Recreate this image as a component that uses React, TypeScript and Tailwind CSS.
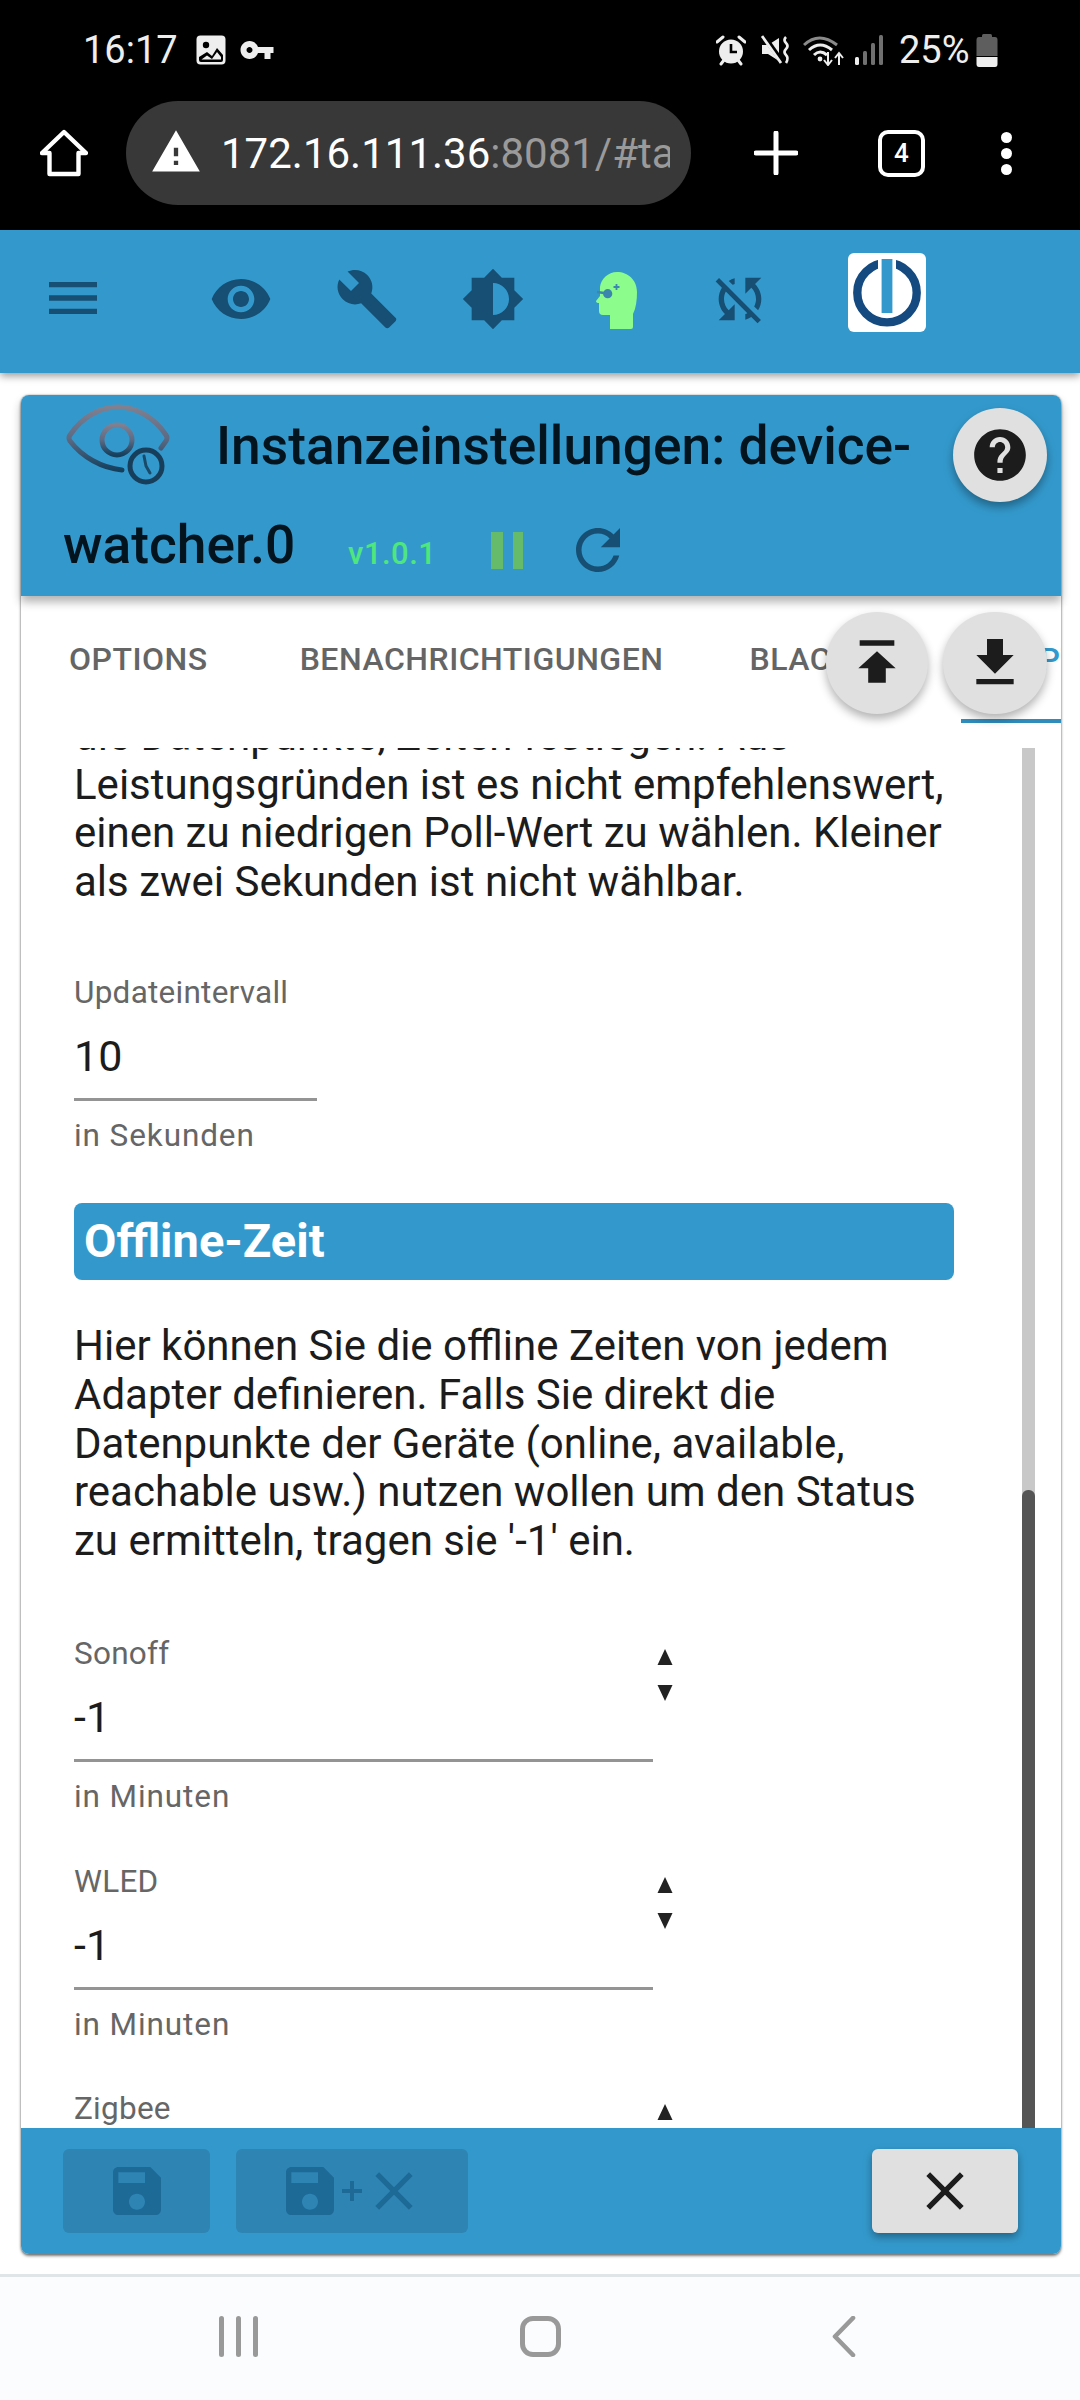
import React from "react";

const DARK = "#164f73";

function I({ d, size, color, className }: { d: string; size: number; color: string; className?: string }) {
  return (
    <svg width={size} height={size} viewBox="0 0 24 24" fill={color} className={className}>
      <path d={d} />
    </svg>
  );
}

const P = {
  menu: "M3 18h18v-2H3v2zm0-5h18v-2H3v2zm0-7v2h18V6H3z",
  eye: "M12 4.5C7 4.5 2.73 7.61 1 12c1.73 4.39 6 7.5 11 7.5s9.27-3.11 11-7.5c-1.73-4.39-6-7.5-11-7.5zM12 17c-2.76 0-5-2.24-5-5s2.24-5 5-5 5 2.24 5 5-2.24 5-5 5zm0-8c-1.66 0-3 1.34-3 3s1.34 3 3 3 3-1.34 3-3-1.34-3-3-3z",
  build: "M22.7 19l-9.1-9.1c.9-2.3.4-5-1.5-6.9-2-2-5-2.4-7.4-1.3L9 6 6 9 1.6 4.7C.4 7.1.9 10.1 2.9 12.1c1.9 1.9 4.6 2.4 6.9 1.5l9.1 9.1c.4.4 1 .4 1.4 0l2.3-2.3c.5-.4.5-1.1.1-1.4z",
  bright: "M20 15.31L23.31 12 20 8.69V4h-4.69L12 .69 8.69 4H4v4.69L.69 12 4 15.31V20h4.69L12 23.31 15.31 20H20v-4.69zM12 18V6c3.31 0 6 2.69 6 6s-2.69 6-6 6z",
  sync: "M10 6.35V4.26c-.8.21-1.55.54-2.23.96l1.46 1.46c.25-.12.5-.24.77-.33zm-7.14-.94l2.36 2.36C4.45 8.99 4 10.44 4 12c0 2.21.91 4.2 2.36 5.64L4 20h6v-6l-2.24 2.24C6.68 15.15 6 13.66 6 12c0-1 .25-1.94.68-2.77l8.08 8.08c-.25.13-.5.25-.77.34v2.09c.8-.21 1.55-.54 2.23-.96l2.36 2.36 1.27-1.27L4.14 4.14 2.86 5.41zM20 4h-6v6l2.24-2.24C17.32 8.85 18 10.34 18 12c0 1-.25 1.94-.68 2.77l1.46 1.46C19.55 15.01 20 13.56 20 12c0-2.21-.91-4.2-2.36-5.64L20 4z",
  refresh: "M17.65 6.35C16.2 4.9 14.21 4 12 4c-4.42 0-7.99 3.58-7.99 8s3.57 8 7.99 8c3.73 0 6.84-2.55 7.73-6h-2.08c-.82 2.33-3.04 4-5.65 4-3.31 0-6-2.69-6-6s2.69-6 6-6c1.66 0 3.14.69 4.22 1.78L13 11h7V4l-2.35 2.35z",
  help: "M12 2C6.48 2 2 6.48 2 12s4.48 10 10 10 10-4.48 10-10S17.52 2 12 2zm1 17h-2v-2h2v2zm2.07-7.75l-.9.92C13.45 12.9 13 13.5 13 15h-2v-.5c0-1.1.45-2.1 1.17-2.83l1.24-1.26c.37-.36.59-.86.59-1.41 0-1.1-.9-2-2-2s-2 .9-2 2H8c0-2.21 1.79-4 4-4s4 1.79 4 4c0 .88-.36 1.68-.93 2.25z",
  top: "M5.5 3.5h13v2h-13zM12 7.6l7 6.4h-3.7v5.4H8.7V14H5z",
  bottom: "M19 9h-4V3H9v6H5l7 7 7-7zM5 18v2h14v-2H5z",
  save: "M17 3H5c-1.11 0-2 .9-2 2v14c0 1.1.89 2 2 2h14c1.1 0 2-.9 2-2V7l-4-4zm-5 16c-1.66 0-3-1.34-3-3s1.34-3 3-3 3 1.34 3 3-1.34 3-3 3zm3-10H5V5h10v4z",
  close: "M19 6.41 17.59 5 12 10.59 6.41 5 5 6.41 10.59 12 5 17.59 6.41 19 12 13.41 17.59 19 19 17.59 13.41 12z",
  warn: "M1 21h22L12 2 1 21zm12-3h-2v-2h2v2zm0-4h-2v-4h2v4z",
  key: "M12.65 10C11.83 7.67 9.61 6 7 6c-3.31 0-6 2.69-6 6s2.69 6 6 6c2.61 0 4.83-1.67 5.65-4H17v4h4v-4h2v-4H12.65zM7 14c-1.1 0-2-.9-2-2s.9-2 2-2 2 .9 2 2-.9 2-2 2z",
};

function StatusBar() {
  return (
    <div className="flex h-[98px] items-center pl-[83px] pt-[2px] text-[38px] text-[#eeeeee]">
      <span className="w-[95px] leading-none">16:17</span>
      <svg width="30" height="30" viewBox="0 0 30 30" className="ml-[18px]">
        <rect x="0.5" y="0.5" width="29" height="29" rx="4" fill="#eeeeee" />
        <circle cx="10" cy="10" r="3.2" fill="#000" />
        <path d="M3 25 L3 22 L11 17 L16 21 L21 13 L27 20 L27 25 Q27 27 25 27 L5 27 Q3 27 3 25 Z" fill="#000" />
        <path d="M5.5 24.5 L11 20.5 L16 24 L21 17 L25 22 L25 24.5 Z" fill="#eeeeee" />
      </svg>
      <I d={P.key} size={36} color="#eeeeee" className="ml-[13px]" />
      <div className="flex-1" />
      <svg width="30" height="31" viewBox="0 0 30 31" className="mr-[15px]">
        <circle cx="15" cy="16.5" r="12" fill="#eeeeee" />
        <path d="M15 9 V17 H21" stroke="#000" strokeWidth="2.6" fill="none" />
        <path d="M1 7 L7 2 M29 7 L23 2" stroke="#eeeeee" strokeWidth="3" strokeLinecap="round" />
        <path d="M5 29 L8 25 M25 29 L22 25" stroke="#eeeeee" strokeWidth="3" strokeLinecap="round" />
      </svg>
      <svg width="30" height="30" viewBox="0 0 30 30" className="mr-[12px]">
        <path d="M1 10 H7 L18 3 V26 L7 19 H1 Z" fill="#eeeeee" />
        <path d="M2 0 L22 28" stroke="#000" strokeWidth="5" />
        <path d="M1 1 L20 28" stroke="#eeeeee" strokeWidth="2.8" />
        <path d="M25 2 Q22 5 25 8 Q28 11 25 14 Q22 17 25 20 Q28 23 25 28" stroke="#eeeeee" strokeWidth="2.6" fill="none" />
      </svg>
      <svg width="42" height="32" viewBox="0 0 42 32" className="mr-[10px]">
        <path d="M1 11 Q16 -3 34 11" stroke="#8a8a8a" strokeWidth="3" fill="none" />
        <path d="M6 16 Q17 6 29 16" stroke="#eeeeee" strokeWidth="3" fill="none" />
        <path d="M11 21 Q17 15 24 21" stroke="#eeeeee" strokeWidth="3" fill="none" />
        <circle cx="17" cy="25" r="2.4" fill="#eeeeee" />
        <path d="M25 18 V30 M21 26 L25 31 L29 26" stroke="#eeeeee" strokeWidth="2" fill="none" />
        <path d="M36 31 V20 M32 24 L36 19 L40 24" stroke="#eeeeee" strokeWidth="2" fill="none" />
      </svg>
      <svg width="29" height="30" viewBox="0 0 29 30" className="mr-[15px]">
        <rect x="0" y="22" width="4" height="8" rx="1.5" fill="#eeeeee" />
        <rect x="8" y="16" width="4" height="14" rx="1.5" fill="#707070" />
        <rect x="16" y="8" width="4" height="22" rx="1.5" fill="#707070" />
        <rect x="24" y="0" width="4" height="30" rx="1.5" fill="#707070" />
      </svg>
      <span className="w-[72px] leading-none">25%</span>
      <svg width="22" height="33" viewBox="0 0 22 33" className="ml-[5px] mr-[82px]">
        <rect x="6" y="0" width="10" height="5" rx="1.5" fill="#5e5e5e" />
        <path d="M3 3 H19 Q21.5 3 21.5 6 V22 H0.5 V6 Q0.5 3 3 3 Z" fill="#5e5e5e" />
        <path d="M0.5 23 H21.5 V30 Q21.5 33 19 33 H3 Q0.5 33 0.5 30 Z" fill="#eeeeee" />
      </svg>
    </div>
  );
}

function UrlBar() {
  return (
    <div className="flex h-[104px] items-center">
      <svg width="48" height="48" viewBox="0 0 48 48" className="ml-[40px]">
        <path d="M24 3 L46 24 H38.5 V45 H9.5 V24 H2 Z" fill="none" stroke="#fff" strokeWidth="4.4" strokeLinejoin="round" />
      </svg>
      <div className="ml-[38px] flex h-[104px] w-[565px] items-center rounded-full bg-[#383838] pl-[24px]">
        <I d={P.warn} size={52} color="#fff" className="mb-[3px] shrink-0" />
        <div className="ml-[19px] w-[449px] overflow-hidden whitespace-nowrap text-[42px] text-white">
          172.16.111.36<span className="text-[#9a9a9a]">:8081/#tab-instances</span>
        </div>
      </div>
      <svg width="44" height="44" viewBox="0 0 44 44" className="ml-[63px]">
        <path d="M22 2 V42 M2 22 H42" stroke="#fff" strokeWidth="5" strokeLinecap="round" />
      </svg>
      <div className="ml-[80px] flex h-[47px] w-[47px] items-center justify-center rounded-[10px] border-[4px] border-white text-[26px] font-medium text-white">
        4
      </div>
      <div className="ml-[76px] flex flex-col gap-[5px]">
        <div className="h-[11px] w-[11px] rounded-full bg-white" />
        <div className="h-[11px] w-[11px] rounded-full bg-white" />
        <div className="h-[11px] w-[11px] rounded-full bg-white" />
      </div>
    </div>
  );
}

function AppBar() {
  return (
    <div className="relative z-20 flex h-[143px] items-start bg-[#3399cc] shadow-[0_3px_8px_rgba(0,0,0,0.4)]">
      <I d={P.menu} size={64} color={DARK} className="ml-[41px] mt-[36px]" />
      <I d={P.eye} size={64} color={DARK} className="ml-[104px] mt-[37px]" />
      <I d={P.build} size={64} color={DARK} className="ml-[62px] mt-[37px]" />
      <I d={P.bright} size={64} color={DARK} className="ml-[62px] mt-[37px]" />
      <svg width="41" height="57" viewBox="0 0 41 57" className="ml-[71px] mt-[42px]">
        <path d="M14 57 H35 Q37 57 37 55 V42 C40 36 41 28 41 20 C41 8 32 0 21 0 C12 0 5 7 4 15 L4 24 L0 29 Q0 31 3 31 V39 Q3 43 7 43 H14 Z" fill="#8cfc8c" />
        <circle cx="11.7" cy="21.7" r="4.6" fill="#3a86ad" />
        <path d="M1 20 L8 21" stroke="#3a86ad" strokeWidth="2.4" />
        <path d="M20.5 12 V18 M17.5 15 H23.5" stroke="#3a86ad" strokeWidth="1.8" />
      </svg>
      <I d={P.sync} size={64} color={DARK} className="ml-[71px] mt-[37px]" />
      <svg width="78" height="79" viewBox="0 0 78 79" className="ml-[76px] mt-[23px]">
        <rect width="78" height="79" rx="6" fill="#fff" />
        <circle cx="39" cy="39.7" r="29.7" fill="none" stroke="#144a80" strokeWidth="8.4" />
        <rect x="30" y="4" width="18" height="58" fill="#fff" />
        <rect x="33.6" y="6" width="10.8" height="54" fill="#3399cc" />
      </svg>
    </div>
  );
}

function Spinner() {
  return (
    <div className="ml-[4px] flex w-[16px] flex-col gap-[20px] pt-[16px]">
      <svg width="16" height="16" viewBox="0 0 16 16"><path d="M8 0 L15.5 16 H0.5 Z" fill="#222" /></svg>
      <svg width="16" height="16" viewBox="0 0 16 16"><path d="M8 16 L15.5 0 H0.5 Z" fill="#222" /></svg>
    </div>
  );
}

function Field({ label, value, help, width, spin, className }: { label: string; value: string; help: string; width: string; spin?: boolean; className?: string }) {
  return (
    <div className={"flex " + (className ?? "")}>
      <div className={width}>
        <div className="flex h-[40px] items-center text-[31.5px] tracking-[0.25px] text-[#666666]">{label}</div>
        <div className="mt-[12px] flex h-[64px] items-center text-[43px] text-[#1c1c1c]">{value}</div>
        <div className="mt-[10px] h-[3px] bg-[#949494]" />
        <div className="mt-[14px] flex h-[40px] items-center text-[31.5px] tracking-[0.9px] text-[#666666]">{help}</div>
      </div>
      {spin && <Spinner />}
    </div>
  );
}

function Dialog() {
  return (
    <div className="relative ml-[21px] mt-[22px] flex h-[1859px] w-[1040px] flex-col rounded-[8px] bg-white shadow-[0_2px_3px_rgba(0,0,0,0.5),0_0_2px_rgba(0,0,0,0.35)]">
      <div className="relative z-10 h-[201px] rounded-t-[8px] bg-[#3399cc] text-[#04141f] shadow-[0_6px_10px_rgba(0,0,0,0.3)]">
        <div className="flex h-[100px] items-center">
          <svg width="104" height="84" viewBox="0 0 104 84" className="ml-[45px] mb-[1px]">
            <defs>
              <linearGradient id="eyeg" x1="0" y1="0" x2="0" y2="1">
                <stop offset="0" stopColor="#808090" />
                <stop offset="0.5" stopColor="#5c6a84" />
                <stop offset="1" stopColor="#14405e" />
              </linearGradient>
            </defs>
            <g fill="none" stroke="url(#eyeg)" strokeWidth="5" strokeLinecap="round">
              <path d="M95 45 L100 38 Q102 35 100 32 C88 14 70 4 52 4 C34 4 16 14 4 32 Q2 35 4 38 C16 54 36 65 56 67" />
              <circle cx="51" cy="37" r="15" />
            </g>
            <g fill="none" stroke="#1a4a6a" strokeWidth="5" strokeLinecap="round">
              <circle cx="80" cy="63" r="16" stroke="#173f5c" />
              <path d="M78 53 L80 63 L84 70" strokeWidth="3" />
            </g>
          </svg>
          <span className="ml-[46px] mt-[3px] whitespace-nowrap text-[53.3px] font-medium leading-none">Instanzeinstellungen: device-</span>
        </div>
        <div className="flex h-[101px] items-center">
          <span className="ml-[42px] w-[232px] text-[53.3px] font-medium leading-none">watcher.0</span>
          <span className="ml-[53px] mt-[17px] w-[88px] text-[31px] tracking-[0.5px] font-medium text-[#4fe67f]">v1.0.1</span>
          <div className="ml-[55px] mt-[9px] flex gap-[10px]">
            <div className="h-[37px] w-[12px] bg-[#66bb6a]" />
            <div className="h-[37px] w-[10px] bg-[#66bb6a]" />
          </div>
          <I d={P.refresh} size={66} color={DARK} className="ml-[42px] mt-[8px]" />
        </div>
      </div>

      <div className="relative flex h-[127px] shrink-0 items-center overflow-hidden whitespace-nowrap pb-[2px] text-[32px] font-medium tracking-[0.5px] text-[#656565]">
        <span className="ml-[48px]">OPTIONS</span>
        <span className="ml-[92px]">BENACHRICHTIGUNGEN</span>
        <span className="ml-[86px]">BLACKLIST</span>
        <span className="ml-[56px] text-[#3399cc]">ADAPTER</span>
        <div className="absolute bottom-0 right-0 h-[4px] w-[100px] bg-[#2f8cbb]" />
      </div>

      <div className="mt-[25px] flex min-h-0 flex-1">
        <div className="min-w-0 flex-1 overflow-hidden pl-[53px]">
          <div className="mt-[-36px] w-[884px]">
            <p className="text-[42px] leading-[48.6px] text-[#1c1c1c]">
              die Datenpunkte, Zeiten festlegen. Aus Leistungsgründen ist es nicht empfehlenswert, einen zu niedrigen Poll-Wert zu wählen. Kleiner als zwei Sekunden ist nicht wählbar.
            </p>
            <Field className="mt-[66px]" label="Updateintervall" value="10" help="in Sekunden" width="w-[243px]" />
            <div className="mt-[48px] flex h-[77px] w-[880px] items-center rounded-[8px] bg-[#3399cc] pl-[10px] pb-[1px] text-[47px] font-bold text-white">Offline-Zeit</div>
            <p className="mt-[42px] text-[42px] leading-[48.6px] text-[#1c1c1c]">
              Hier können Sie die offline Zeiten von jedem Adapter definieren. Falls Sie direkt die Datenpunkte der Geräte (online, available, reachable usw.) nutzen wollen um den Status zu ermitteln, tragen sie '-1' ein.
            </p>
            <Field className="mt-[68px]" label="Sonoff" value="-1" help="in Minuten" width="w-[579px]" spin />
            <Field className="mt-[45px]" label="WLED" value="-1" help="in Minuten" width="w-[579px]" spin />
            <Field className="mt-[44px]" label="Zigbee" value="-1" help="in Minuten" width="w-[579px]" spin />
          </div>
        </div>
        <div className="mr-[26px] flex w-[13px] shrink-0 flex-col bg-[#c8c8c8]">
          <div className="flex-1" />
          <div className="h-[638px] rounded-t-[6px] bg-[#555555]" />
        </div>
      </div>

      <div className="relative z-10 flex h-[126px] shrink-0 items-start rounded-b-[8px] bg-[#3399cc] pt-[21px]">
        <div className="ml-[42px] flex h-[84px] w-[147px] items-center justify-center rounded-[6px] bg-[#2e84b3]">
          <I d={P.save} size={64} color="#1d6a97" />
        </div>
        <div className="ml-[26px] flex h-[84px] w-[232px] items-center justify-center rounded-[6px] bg-[#2e84b3]">
          <I d={P.save} size={64} color="#1d6a97" />
          <svg width="20" height="20" viewBox="0 0 20 20"><path d="M10 0 V20 M0 10 H20" stroke="#1d6a97" strokeWidth="4" /></svg>
          <I d={P.close} size={64} color="#1d6a97" />
        </div>
        <div className="ml-auto mr-[43px] flex h-[84px] w-[146px] items-center justify-center rounded-[6px] bg-[#e0e0e0] shadow-[0_4px_8px_rgba(0,0,0,0.35)]">
          <I d={P.close} size={64} color="#1c1c1c" />
        </div>
      </div>

      <div className="absolute right-[14px] top-[13px] z-20 flex h-[94px] w-[94px] items-center justify-center rounded-full bg-[#e0e0e0] shadow-[0_5px_10px_rgba(0,0,0,0.35)]">
        <I d={P.help} size={62} color="#1c1c1c" />
      </div>
      <div className="absolute left-[805px] top-[217px] z-20 flex h-[102px] w-[102px] items-center justify-center rounded-full bg-[#e0e0e0] shadow-[0_5px_10px_rgba(0,0,0,0.3)]">
        <I d={P.top} size={64} color="#1c1c1c" />
      </div>
      <div className="absolute left-[922px] top-[217px] z-20 flex h-[102px] w-[104px] items-center justify-center rounded-full bg-[#e0e0e0] shadow-[0_5px_10px_rgba(0,0,0,0.3)]">
        <I d={P.bottom} size={64} color="#1c1c1c" />
      </div>
    </div>
  );
}

function NavBar() {
  return (
    <div className="mt-[20px] flex h-[126px] border-t-[3px] border-[#e0e5e8] bg-[#fbfcfe] pt-[39px]">
      <div className="ml-[219px] flex h-[41px] gap-[12px]">
        <div className="h-full w-[5px] rounded-full bg-[#999999]" />
        <div className="h-full w-[5px] rounded-full bg-[#999999]" />
        <div className="h-full w-[5px] rounded-full bg-[#999999]" />
      </div>
      <div className="ml-[262px] h-[41px] w-[41px] rounded-[13px] border-[5px] border-[#999999]" />
      <svg width="24" height="41" viewBox="0 0 24 41" className="ml-[271px]">
        <path d="M21 2 L3 20.5 L21 39" fill="none" stroke="#999999" strokeWidth="4.6" strokeLinecap="round" strokeLinejoin="round" />
      </svg>
    </div>
  );
}

export default function App() {
  return (
    <div className="h-[2400px] w-[1080px] overflow-hidden bg-white font-['Roboto',sans-serif]">
      <div className="h-[230px] bg-black">
        <StatusBar />
        <div className="h-[3px]" />
        <UrlBar />
      </div>
      <AppBar />
      <Dialog />
      <NavBar />
    </div>
  );
}
